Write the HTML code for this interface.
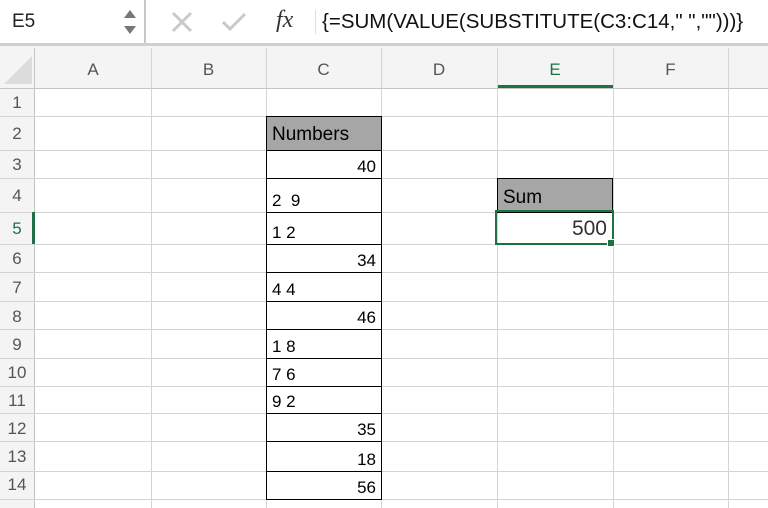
<!DOCTYPE html>
<html><head><meta charset="utf-8"><style>
*{margin:0;padding:0;box-sizing:border-box}
body{width:768px;height:508px;overflow:hidden;background:#fff;font-family:"Liberation Sans",sans-serif;position:relative}
.a{position:absolute}
.hl{position:absolute;height:1px;background:#d4d4d4;left:0;width:768px}
.vl{position:absolute;width:1px;background:#d4d4d4;top:48px;height:460px}
.ch{position:absolute;top:48px;height:40px;line-height:44px;text-align:center;font-size:17px;color:#555}
.rh{position:absolute;left:0;width:34px;text-align:center;font-size:17px;color:#555}
.c{position:absolute;left:266px;width:116px;border:1.5px solid #000;font-size:17px;color:#000;padding:0 5px;display:flex;align-items:flex-end;padding-bottom:1px}
.r{justify-content:flex-end}
</style></head><body>
<div class="a" style="left:0;top:0;width:768px;height:44px;background:#fff"></div>
<div class="a" style="left:12px;top:11px;font-size:19px;color:#222">E5</div>
<svg class="a" style="left:120px;top:8px" width="20" height="30"><polygon points="4,10 10,2 16,10" fill="#777"/><polygon points="4,18 10,26 16,18" fill="#777"/></svg>
<div class="a" style="left:144px;top:0;width:2px;height:44px;background:#c8c8c8"></div>
<svg class="a" style="left:170px;top:10px" width="24" height="24"><path d="M3 3L21 21M21 3L3 21" stroke="#c9c9c9" stroke-width="3"/></svg>
<svg class="a" style="left:220px;top:10px" width="28" height="24"><path d="M3 12L10 19L25 4" stroke="#c9c9c9" stroke-width="3" fill="none"/></svg>
<div class="a" style="left:276px;top:7px;font-family:'Liberation Serif',serif;font-style:italic;font-size:24px;color:#333">fx</div>
<div class="a" style="left:315px;top:10px;width:1px;height:24px;background:#ddd"></div>
<div class="a" style="left:322px;top:10px;font-size:20.5px;color:#111">{=SUM(VALUE(SUBSTITUTE(C3:C14," ","")))}</div>
<div class="a" style="left:0;top:43px;width:768px;height:3px;background:#d0d0d0"></div>
<div class="a" style="left:0;top:46px;width:768px;height:42px;background:#f4f4f4"></div>
<div class="a" style="left:0;top:88px;width:34px;height:420px;background:#f4f4f4"></div>
<svg class="a" style="left:4px;top:56px" width="28" height="30"><polygon points="28,0 28,28 0,28" fill="#dcdcdc"/></svg>
<div class="ch" style="left:35px;width:116px">A</div>
<div class="ch" style="left:151px;width:115px">B</div>
<div class="ch" style="left:266px;width:115px">C</div>
<div class="ch" style="left:381px;width:116px">D</div>
<div class="ch" style="left:497px;width:116px;color:#1e7145">E</div>
<div class="ch" style="left:613px;width:115px">F</div>
<div class="a" style="left:497px;top:85px;width:116px;height:3px;background:#1e7145"></div>
<div class="vl" style="left:34px;background:#c4c4c4"></div>
<div class="vl" style="left:151px"></div><div class="vl" style="left:266px"></div><div class="vl" style="left:381px"></div>
<div class="vl" style="left:497px"></div><div class="vl" style="left:613px"></div><div class="vl" style="left:728px"></div>
<div class="hl" style="top:88px;background:#c4c4c4"></div>
<div class="hl" style="top:116px"></div><div class="hl" style="top:150px"></div><div class="hl" style="top:178px"></div>
<div class="hl" style="top:212px"></div><div class="hl" style="top:244px"></div><div class="hl" style="top:272px"></div>
<div class="hl" style="top:301px"></div><div class="hl" style="top:329px"></div><div class="hl" style="top:358px"></div>
<div class="hl" style="top:386px"></div><div class="hl" style="top:413px"></div><div class="hl" style="top:441px"></div>
<div class="hl" style="top:471px"></div><div class="hl" style="top:499px"></div>
<div class="rh" style="top:93px">1</div><div class="rh" style="top:124px">2</div><div class="rh" style="top:155px">3</div>
<div class="rh" style="top:186px">4</div><div class="rh" style="top:219px;color:#1e7145">5</div><div class="rh" style="top:249px">6</div>
<div class="rh" style="top:278px">7</div><div class="rh" style="top:307px">8</div><div class="rh" style="top:335px">9</div>
<div class="rh" style="top:363px">10</div><div class="rh" style="top:391px">11</div><div class="rh" style="top:419px">12</div>
<div class="rh" style="top:447px">13</div><div class="rh" style="top:475px">14</div>
<div class="a" style="left:32px;top:212px;width:3px;height:32px;background:#1e7145"></div>
<div class="c" style="top:116px;height:35px;background:#a6a6a6;font-size:19px;padding-bottom:4px">Numbers</div>
<div class="c r" style="top:150px;height:29px">40</div>
<div class="c" style="top:178px;height:35px">2&nbsp;&nbsp;9</div>
<div class="c" style="top:212px;height:33px">1 2</div>
<div class="c r" style="top:244px;height:29px">34</div>
<div class="c" style="top:272px;height:30px">4 4</div>
<div class="c r" style="top:301px;height:29px">46</div>
<div class="c" style="top:329px;height:30px">1 8</div>
<div class="c" style="top:358px;height:29px">7 6</div>
<div class="c" style="top:386px;height:28px">9 2</div>
<div class="c r" style="top:413px;height:29px">35</div>
<div class="c r" style="top:441px;height:31px">18</div>
<div class="c r" style="top:471px;height:29px">56</div>
<div class="c" style="left:497px;top:178px;height:35px;background:#a6a6a6;font-size:19px;padding-bottom:3px">Sum</div>
<div class="a" style="left:495px;top:210px;width:119px;height:35px;border:2px solid #1e7145;font-size:21px;color:#333;text-align:right;padding:5px 5px 0 0">500</div>
<div class="a" style="left:607px;top:239px;width:8px;height:8px;background:#1e7145;border:1px solid #fff"></div>
</body></html>
